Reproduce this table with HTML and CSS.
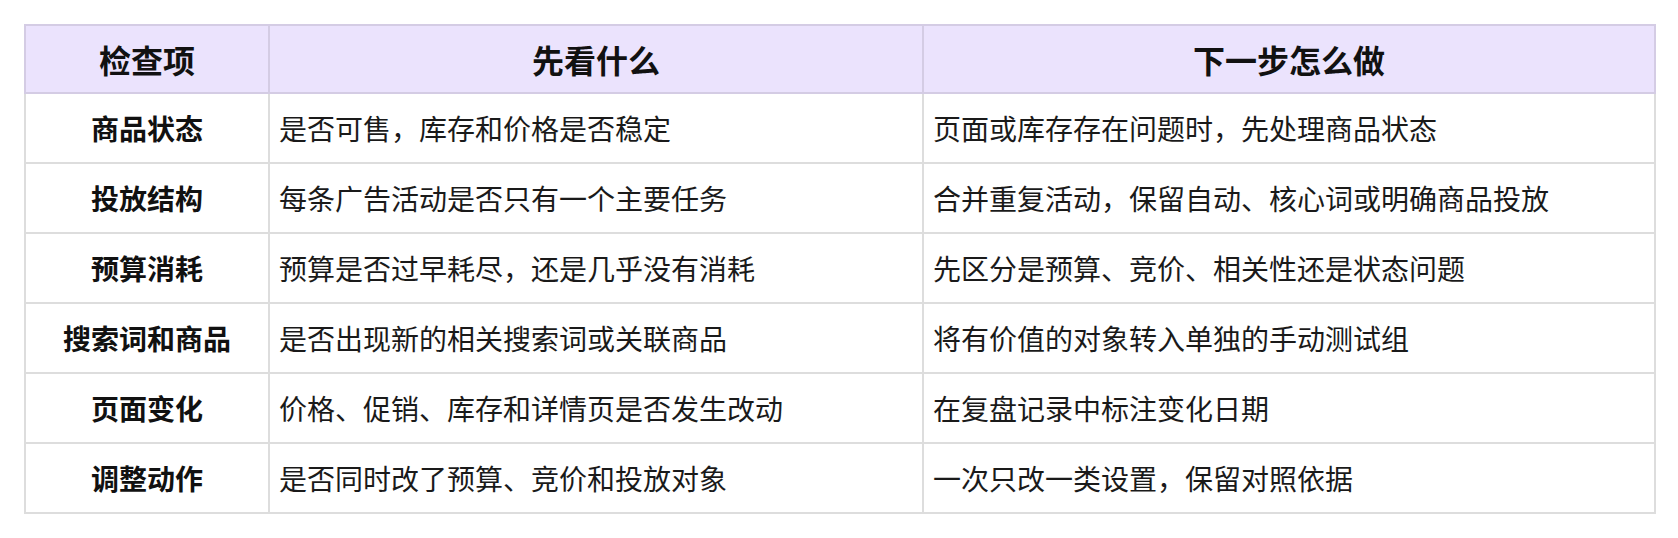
FILE: index.html
```html
<!DOCTYPE html>
<html lang="zh-CN">
<head>
<meta charset="utf-8">
<link rel="stylesheet" href="styles.css">
</head>
<body>
<table class="grid">
  <colgroup>
    <col class="c1"><col class="c2"><col class="c3">
  </colgroup>
  <thead>
    <tr><th>检查项</th><th>先看什么</th><th>下一步怎么做</th></tr>
  </thead>
  <tbody>
    <tr><td class="key">商品状态</td><td>是否可售，库存和价格是否稳定</td><td>页面或库存存在问题时，先处理商品状态</td></tr>
    <tr><td class="key">投放结构</td><td>每条广告活动是否只有一个主要任务</td><td>合并重复活动，保留自动、核心词或明确商品投放</td></tr>
    <tr><td class="key">预算消耗</td><td>预算是否过早耗尽，还是几乎没有消耗</td><td>先区分是预算、竞价、相关性还是状态问题</td></tr>
    <tr><td class="key">搜索词和商品</td><td>是否出现新的相关搜索词或关联商品</td><td>将有价值的对象转入单独的手动测试组</td></tr>
    <tr><td class="key">页面变化</td><td>价格、促销、库存和详情页是否发生改动</td><td>在复盘记录中标注变化日期</td></tr>
    <tr><td class="key">调整动作</td><td>是否同时改了预算、竞价和投放对象</td><td>一次只改一类设置，保留对照依据</td></tr>
  </tbody>
</table>
</body>
</html>
```

FILE: styles.css
```css
html, body {
  margin: 0;
  padding: 0;
  background: #ffffff;
}
body {
  padding: 24px 0 0 24px;
  font-family: "Noto Sans CJK SC", "Noto Sans", sans-serif;
  color: #1a1a1a;
}
.grid {
  border-collapse: collapse;
  width: 1630px;
  table-layout: fixed;
}
.c1 { width: 244px; }
.c2 { width: 654px; }
.c3 { width: 732px; }
.grid th {
  background: #ebe3fd;
  border: 2px solid #d4cce4;
  height: 66px;
  padding: 0;
  font-size: 32px;
  font-weight: 700;
  text-align: center;
  color: #111111;
  line-height: 1;
}
.grid td {
  border: 2px solid #dddddd;
  height: 68px;
  padding: 0 0 0 9px;
  font-size: 28px;
  line-height: 1;
  text-align: left;
  vertical-align: middle;
}
.grid td.key {
  font-weight: 700;
  font-size: 28px;
  text-align: center;
  padding: 0;
  color: #111111;
}
```
